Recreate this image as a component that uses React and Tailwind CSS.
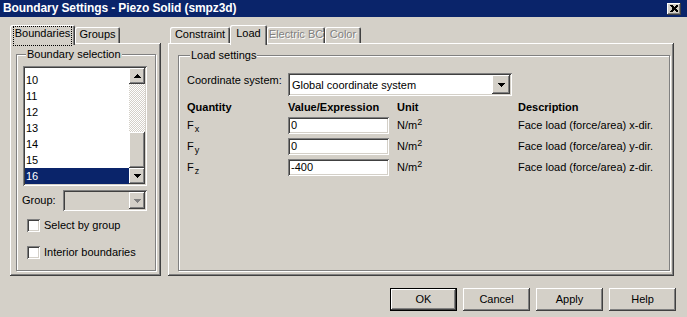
import React from 'react'

const raised = "shadow-[inset_-1px_-1px_#404040,inset_1px_1px_#fff,inset_-2px_-2px_#808080]"
const sunken = "shadow-[inset_1px_1px_#808080,inset_-1px_-1px_#fff,inset_2px_2px_#404040,inset_-2px_-2px_#d4d0c8]"
const etched = "border border-[#808080] shadow-[inset_1px_1px_#fff,1px_1px_#fff]"

const Arrow = ({ up, color = "#000" }) => (
  <svg width="7" height="4" viewBox="0 0 7 4" shapeRendering="crispEdges">
    <path
      d={up ? "M3 0h1v1h1v1h1v1h1v1h-7v-1h1v-1h1v-1h1z" : "M0 0h7v1h-1v1h-1v1h-1v1h-1v-1h-1v-1h-1v-1h-1z"}
      fill={color}
    />
  </svg>
)

const Tab = ({ label, active, disabled, focus, className }) => (
  <div
    className={`${className} ${active ? "h-[20px] -mb-[2px] relative z-10 pt-[2px]" : "h-[16px] pt-[1px]"} bg-[#d4d0c8] rounded-t-[2px] shadow-[inset_1px_1px_#fff,inset_-1px_0_#404040,inset_-2px_0_#808080] flex justify-center`}
  >
    <span
      className={`leading-[13px] px-[1px] ${focus ? "outline-1 outline-dotted outline-black" : ""} ${disabled ? "text-[#808080] [text-shadow:1px_1px_0_#fff]" : ""}`}
    >
      {label}
    </span>
  </div>
)

const Checkbox = ({ label }) => (
  <div className="flex items-center h-[13px]">
    <div className={`w-[13px] h-[13px] bg-white ${sunken}`} />
    <span className="ml-[4px] leading-[13px]">{label}</span>
  </div>
)

const Sub = ({ s }) => (
  <span className="leading-[13px]">
    F<sub className="text-[9px] relative top-[3px] ml-[1px]">{s}</sub>
  </span>
)

const Unit = () => (
  <span className="leading-[13px]">
    N/m<sup className="text-[9px]">2</sup>
  </span>
)

export default function App() {
  const items = ["10", "11", "12", "13", "14", "15", "16"]
  const rows = [
    { s: "x", v: "0", d: "Face load (force/area) x-dir." },
    { s: "y", v: "0", d: "Face load (force/area) y-dir." },
    { s: "z", v: "-400", d: "Face load (force/area) z-dir." },
  ]

  return (
    <div className="w-[687px] h-[317px] bg-[#d4d0c8] font-['Liberation_Sans',Arial,sans-serif] text-[11px] text-black overflow-hidden flex flex-col">
      {/* title bar */}
      <div className="h-[17px] shrink-0 bg-[#0a246a] flex items-center justify-between pl-[3px] pr-[6px]">
        <span className="text-white font-bold text-[12px] leading-[17px] tracking-[-0.1px]">
          Boundary Settings - Piezo Solid (smpz3d)
        </span>
        <div className={`w-[14px] h-[12px] bg-[#d4d0c8] ${raised} flex items-center justify-center`}>
          <svg width="8" height="7" viewBox="0 0 8 7" shapeRendering="crispEdges">
            <path d="M0 0h2l2 2 2-2h2v1l-2 2v1l2 2v1h-2l-2-2-2 2h-2v-1l2-2v-1l-2-2z" fill="#000" />
          </svg>
        </div>
      </div>

      <div className="flex pl-[10px] pt-[8px] gap-[7px]">
        {/* left column */}
        <div className="w-[151px] flex flex-col">
          <div className="h-[18px] flex items-end">
            <Tab label="Boundaries" active focus className="w-[65px]" />
            <Tab label="Groups" className="w-[45px]" />
          </div>
          <div className={`h-[233px] ${raised} pt-[5px] pl-[6px] pr-[5px] pb-[5px] flex`}>
            <fieldset className={`flex-1 ${etched} pl-[6px] pr-[8px]`}>
              <legend className="ml-[3px] px-[1px] bg-[#d4d0c8] leading-[13px]">Boundary selection</legend>
              <div className={`mt-[5px] w-[124px] h-[120px] bg-white ${sunken} p-[2px] flex`}>
                <div className="flex-1 flex flex-col justify-end overflow-hidden">
                  {items.map((it) => (
                    <div
                      key={it}
                      className={`h-[16px] leading-[16px] pl-[1px] ${it === "16" ? "bg-[#0a246a] text-white" : ""}`}
                    >
                      {it}
                    </div>
                  ))}
                </div>
                <div className="w-[16px] flex flex-col">
                  <div className={`h-[16px] bg-[#d4d0c8] ${raised} flex items-center justify-center`}>
                    <Arrow up />
                  </div>
                  <div className="h-[48px] bg-[image:repeating-conic-gradient(#fff_0_25%,#d4d0c8_0_50%)] [background-size:2px_2px]" />
                  <div className={`flex-1 bg-[#d4d0c8] ${raised}`} />
                  <div className={`h-[16px] bg-[#d4d0c8] ${raised} flex items-center justify-center`}>
                    <Arrow />
                  </div>
                </div>
              </div>
              <div className="mt-[4px] flex items-center h-[21px]">
                <span className="leading-[13px] -ml-[1px] w-[41px]">Group:</span>
                <div className={`w-[84px] h-[21px] bg-[#d4d0c8] ${sunken} p-[2px] flex justify-end`}>
                  <div className={`w-[16px] h-[17px] bg-[#d4d0c8] ${raised} flex items-center justify-center`}>
                    <Arrow color="#808080" />
                  </div>
                </div>
              </div>
              <div className="mt-[8px] pl-[4px] flex flex-col gap-[14px]">
                <Checkbox label="Select by group" />
                <Checkbox label="Interior boundaries" />
              </div>
            </fieldset>
          </div>
        </div>

        {/* right column */}
        <div className="w-[506px] flex flex-col">
          <div className="h-[18px] flex items-end pl-[2px]">
            <Tab label="Constraint" className="w-[60px]" />
            <Tab label="Load" active className="w-[37px]" />
            <Tab label="Electric BC" disabled className="w-[58px]" />
            <Tab label="Color" disabled className="w-[36px]" />
          </div>
          <div className={`h-[233px] ${raised} pt-[6px] pl-[10px] pr-[4px] pb-[5px] flex`}>
            <fieldset className={`flex-1 ${etched} pl-[8px]`}>
              <legend className="ml-[3px] px-[1px] bg-[#d4d0c8] leading-[13px]">Load settings</legend>
              <div className="mt-[11px] flex items-start">
                <span className="w-[101px] leading-[13px] mt-[1px]">Coordinate system:</span>
                <div className={`w-[224px] h-[23px] bg-white ${sunken} p-[2px] flex items-center`}>
                  <span className="flex-1 pl-[2px] leading-[13px] mt-[1px]">Global coordinate system</span>
                  <div className={`w-[18px] h-[19px] bg-[#d4d0c8] ${raised} flex items-center justify-center`}>
                    <Arrow />
                  </div>
                </div>
              </div>
              <div className="mt-[5px] grid grid-cols-[101px_109px_121px_1fr] font-bold leading-[13px]">
                <span>Quantity</span>
                <span>Value/Expression</span>
                <span>Unit</span>
                <span>Description</span>
              </div>
              <div className="mt-[3px] flex flex-col gap-[4px]">
                {rows.map((r) => (
                  <div key={r.s} className="grid grid-cols-[101px_109px_121px_1fr] items-center h-[17px]">
                    <Sub s={r.s} />
                    <div className={`w-[101px] h-[17px] bg-white ${sunken} pl-[3px] leading-[17px]`}>{r.v}</div>
                    <Unit />
                    <span className="leading-[13px]">{r.d}</span>
                  </div>
                ))}
              </div>
            </fieldset>
          </div>
        </div>
      </div>

      {/* dialog buttons */}
      <div className="mt-[12px] flex gap-[6px] pl-[390px]">
        <div className={`w-[67px] h-[23px] border border-black bg-[#d4d0c8] ${raised} flex items-center justify-center`}>OK</div>
        <div className={`w-[67px] h-[23px] bg-[#d4d0c8] ${raised} flex items-center justify-center`}>Cancel</div>
        <div className={`w-[67px] h-[23px] bg-[#d4d0c8] ${raised} flex items-center justify-center`}>Apply</div>
        <div className={`w-[67px] h-[23px] bg-[#d4d0c8] ${raised} flex items-center justify-center`}>Help</div>
      </div>
    </div>
  )
}
